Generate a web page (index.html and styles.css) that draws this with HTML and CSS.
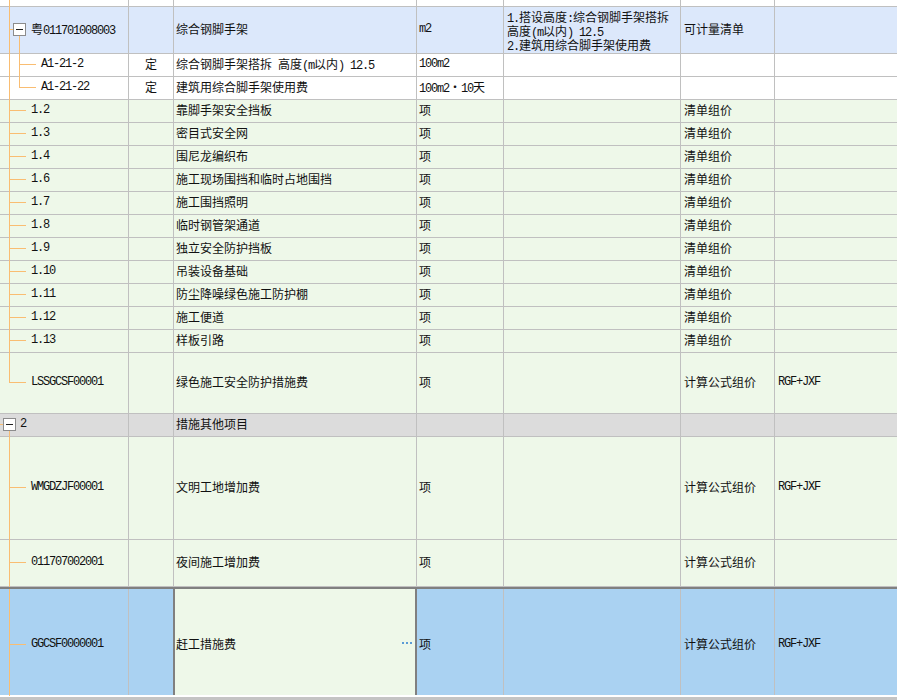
FILE: index.html
```html
<!DOCTYPE html>
<html lang="zh">
<head>
<meta charset="utf-8">
<title>措施项目</title>
<link rel="stylesheet" href="styles.css">
</head>
<body>
<div class="grid">
  <div class="row h-top">
    <div class="c c1"><span class="v9"></span></div><div class="c"></div><div class="c"></div><div class="c"></div><div class="c"></div><div class="c"></div><div class="c"></div>
  </div>

  <div class="row h47 bg-blue">
    <div class="c c1 lv-head"><span class="v9"></span><span class="hstub-box"></span><span class="box box-l2"><i></i></span><span class="v19-below"></span><span class="t">粤<span class="code">011701008003</span></span></div>
    <div class="c"></div>
    <div class="c">综合钢脚手架</div>
    <div class="c"><span class="code">m2</span></div>
    <div class="c multi"><span class="t"><span class="code">1.</span>搭设高度<span class="code">:</span>综合钢脚手架搭拆<br>高度<span class="code">(m</span>以内<span class="code">) 12.5</span><br><span class="code">2.</span>建筑用综合脚手架使用费</span></div>
    <div class="c">可计量清单</div>
    <div class="c"></div>
  </div>

  <div class="row h23 bg-white">
    <div class="c c1 lv-child"><span class="v9"></span><span class="v19"></span><span class="h19"></span><span class="code">A1-21-2</span></div>
    <div class="c center">定</div>
    <div class="c"><span class="t">综合钢脚手架搭拆<span class="code"> </span>高度<span class="code">(m</span>以内<span class="code">) 12.5</span></span></div>
    <div class="c"><span class="code">100m2</span></div>
    <div class="c"></div><div class="c"></div><div class="c"></div>
  </div>

  <div class="row h23 bg-white">
    <div class="c c1 lv-child"><span class="v9"></span><span class="v19 half"></span><span class="h19"></span><span class="code">A1-21-22</span></div>
    <div class="c center">定</div>
    <div class="c">建筑用综合脚手架使用费</div>
    <div class="c"><span class="t"><span class="code">100m2</span>・<span class="code">10</span>天</span></div>
    <div class="c"></div><div class="c"></div><div class="c"></div>
  </div>

  <div class="row h23 bg-green">
    <div class="c c1 lv2"><span class="v9"></span><span class="h9"></span><span class="code">1.2</span></div>
    <div class="c"></div><div class="c">靠脚手架安全挡板</div><div class="c">项</div><div class="c"></div><div class="c">清单组价</div><div class="c"></div>
  </div>
  <div class="row h23 bg-green">
    <div class="c c1 lv2"><span class="v9"></span><span class="h9"></span><span class="code">1.3</span></div>
    <div class="c"></div><div class="c">密目式安全网</div><div class="c">项</div><div class="c"></div><div class="c">清单组价</div><div class="c"></div>
  </div>
  <div class="row h23 bg-green">
    <div class="c c1 lv2"><span class="v9"></span><span class="h9"></span><span class="code">1.4</span></div>
    <div class="c"></div><div class="c">围尼龙编织布</div><div class="c">项</div><div class="c"></div><div class="c">清单组价</div><div class="c"></div>
  </div>
  <div class="row h23 bg-green">
    <div class="c c1 lv2"><span class="v9"></span><span class="h9"></span><span class="code">1.6</span></div>
    <div class="c"></div><div class="c">施工现场围挡和临时占地围挡</div><div class="c">项</div><div class="c"></div><div class="c">清单组价</div><div class="c"></div>
  </div>
  <div class="row h23 bg-green">
    <div class="c c1 lv2"><span class="v9"></span><span class="h9"></span><span class="code">1.7</span></div>
    <div class="c"></div><div class="c">施工围挡照明</div><div class="c">项</div><div class="c"></div><div class="c">清单组价</div><div class="c"></div>
  </div>
  <div class="row h23 bg-green">
    <div class="c c1 lv2"><span class="v9"></span><span class="h9"></span><span class="code">1.8</span></div>
    <div class="c"></div><div class="c">临时钢管架通道</div><div class="c">项</div><div class="c"></div><div class="c">清单组价</div><div class="c"></div>
  </div>
  <div class="row h23 bg-green">
    <div class="c c1 lv2"><span class="v9"></span><span class="h9"></span><span class="code">1.9</span></div>
    <div class="c"></div><div class="c">独立安全防护挡板</div><div class="c">项</div><div class="c"></div><div class="c">清单组价</div><div class="c"></div>
  </div>
  <div class="row h23 bg-green">
    <div class="c c1 lv2"><span class="v9"></span><span class="h9"></span><span class="code">1.10</span></div>
    <div class="c"></div><div class="c">吊装设备基础</div><div class="c">项</div><div class="c"></div><div class="c">清单组价</div><div class="c"></div>
  </div>
  <div class="row h23 bg-green">
    <div class="c c1 lv2"><span class="v9"></span><span class="h9"></span><span class="code">1.11</span></div>
    <div class="c"></div><div class="c">防尘降噪绿色施工防护棚</div><div class="c">项</div><div class="c"></div><div class="c">清单组价</div><div class="c"></div>
  </div>
  <div class="row h23 bg-green">
    <div class="c c1 lv2"><span class="v9"></span><span class="h9"></span><span class="code">1.12</span></div>
    <div class="c"></div><div class="c">施工便道</div><div class="c">项</div><div class="c"></div><div class="c">清单组价</div><div class="c"></div>
  </div>
  <div class="row h23 bg-green">
    <div class="c c1 lv2"><span class="v9"></span><span class="h9"></span><span class="code">1.13</span></div>
    <div class="c"></div><div class="c">样板引路</div><div class="c">项</div><div class="c"></div><div class="c">清单组价</div><div class="c"></div>
  </div>

  <div class="row h61 bg-green">
    <div class="c c1 lv2"><span class="v9 half"></span><span class="h9"></span><span class="code">LSSGCSF00001</span></div>
    <div class="c"></div><div class="c">绿色施工安全防护措施费</div><div class="c">项</div><div class="c"></div><div class="c">计算公式组价</div><div class="c"><span class="code">RGF+JXF</span></div>
  </div>

  <div class="row h23 bg-gray">
    <div class="c c1 lv1"><span class="h0"></span><span class="box box-l1"><i></i></span><span class="v9-below"></span><span class="code">2</span></div>
    <div class="c"></div><div class="c">措施其他项目</div><div class="c"></div><div class="c"></div><div class="c"></div><div class="c"></div>
  </div>

  <div class="row h103 bg-green">
    <div class="c c1 lv2"><span class="v9"></span><span class="h9"></span><span class="code">WMGDZJF00001</span></div>
    <div class="c"></div><div class="c">文明工地增加费</div><div class="c">项</div><div class="c"></div><div class="c">计算公式组价</div><div class="c"><span class="code">RGF+JXF</span></div>
  </div>

  <div class="row h47 bg-green">
    <div class="c c1 lv2"><span class="v9"></span><span class="h9"></span><span class="code">011707002001</span></div>
    <div class="c"></div><div class="c">夜间施工增加费</div><div class="c">项</div><div class="c"></div><div class="c">计算公式组价</div><div class="c"></div>
  </div>

  <div class="row sel">
    <div class="c c1 lv2"><span class="v9"></span><span class="h9"></span><span class="code">GGCSF0000001</span></div>
    <div class="c c2-sel"></div>
    <div class="c edit"><span>赶工措施费</span><svg class="dots" width="10" height="2" viewBox="0 0 10 2"><rect x="0" y="0" width="2" height="2" fill="#5b9cd6"/><rect x="4" y="0" width="2" height="2" fill="#5b9cd6"/><rect x="8" y="0" width="2" height="2" fill="#5b9cd6"/></svg></div>
    <div class="c">项</div><div class="c"></div><div class="c">计算公式组价</div><div class="c"><span class="code">RGF+JXF</span></div>
  </div>

  <div class="footer"></div>
</div>
</body>
</html>
```

FILE: styles.css
```css
html, body {
  margin: 0;
  padding: 0;
  background: #ffffff;
  overflow: hidden;
}

.grid {
  width: 897px;
  font-family: "Noto Sans CJK SC", "Liberation Sans", sans-serif;
  font-size: 12px;
  color: #111111;
}

.row {
  display: grid;
  grid-template-columns: 129px 45px 243px 87px 177px 94px 1fr;
  box-sizing: border-box;
}

.h-top { height: 7px; background: #ffffff; }
.h23 { height: 23px; }
.h47 { height: 47px; }
.h61 { height: 61px; }
.h103 { height: 103px; }

.bg-blue { background: #dce8fb; }
.bg-white { background: #ffffff; }
.bg-green { background: #eef8e9; }
.bg-gray { background: #dcdcdc; }

.c {
  box-sizing: border-box;
  border-right: 1px solid #c0c0c0;
  border-bottom: 1px solid #c0c0c0;
  display: flex;
  align-items: center;
  padding-left: 2px;
  padding-bottom: 2px;
  white-space: nowrap;
  overflow: visible;
  position: relative;
  line-height: 14px;
}

.h-top .c { padding-bottom: 0; }

.c:last-child { border-right: none; }

.t { white-space: pre; }

.center { justify-content: center; padding-left: 0; }

.multi {
  line-height: 14px;
  padding-left: 3px;
  padding-top: 1px;
  padding-bottom: 0;
}

.row > .c:nth-child(6), .row > .c:nth-child(7) { padding-left: 3px; }

.code {
  font-family: "Liberation Mono", "DejaVu Sans Mono", monospace;
  font-size: 12px;
  letter-spacing: -1.2px;
}

.t .code { line-height: 10px; }

/* tree column */
.c1 { padding-left: 31px; }
.lv-child { padding-left: 41px; }
.lv-head { padding-left: 31px; }
.lv1 { padding-left: 20px; }

.v9, .v19, .v9-below, .v19-below, .h9, .h19, .h0, .hstub-box {
  position: absolute;
  background: #f9bd72;
}

.v9 { left: 9px; top: 0; bottom: -1px; width: 1px; }
.v9.half { bottom: auto; height: 50%; }
.v19 { left: 19px; top: 0; bottom: -1px; width: 1px; }
.v19.half { bottom: auto; height: 50%; }
.h9 { left: 10px; width: 16px; top: calc(50% - 1px); height: 1px; }
.h19 { left: 20px; width: 16px; top: calc(50% - 1px); height: 1px; }
.h0 { left: 0; width: 3px; top: calc(50% - 1px); height: 1px; }
.hstub-box { left: 10px; width: 3px; top: calc(50% - 1px); height: 1px; }
.v19-below { left: 19px; width: 1px; top: calc(50% + 6px); bottom: -1px; }
.v9-below { left: 9px; width: 1px; top: calc(50% + 6px); bottom: -1px; }

.box {
  position: absolute;
  top: calc(50% - 7px);
  width: 13px;
  height: 13px;
  box-sizing: border-box;
  border: 1px solid #8c8c8c;
  background: #ffffff;
}
.box i {
  position: absolute;
  left: 2px;
  top: 5px;
  width: 7px;
  height: 1px;
  background: #222222;
}
.box-l2 { left: 13px; }
.box-l1 { left: 3px; }

/* selected row */
.sel {
  height: 108px;
  border-top: 2px solid #808080;
  background: #aad2f2;
}
.sel .c { border-bottom: none; padding-top: 5px; }
.sel .c2-sel { border-right-color: #808080; }
.sel .edit {
  background: #eef8e9;
  border-right-color: #808080;
  box-shadow: inset 1px 0 0 #808080, inset -1px 0 0 #808080;
  justify-content: space-between;
  padding-left: 2px;
  padding-right: 4px;
}
.sel .c1 .h9 { top: calc(50% + 2px); }
.dots { display: block; margin-top: -1px; }

.footer {
  height: 5px;
  box-sizing: border-box;
  border-top: 2px solid #ffffff;
  background: #c4c4c4;
}
```
